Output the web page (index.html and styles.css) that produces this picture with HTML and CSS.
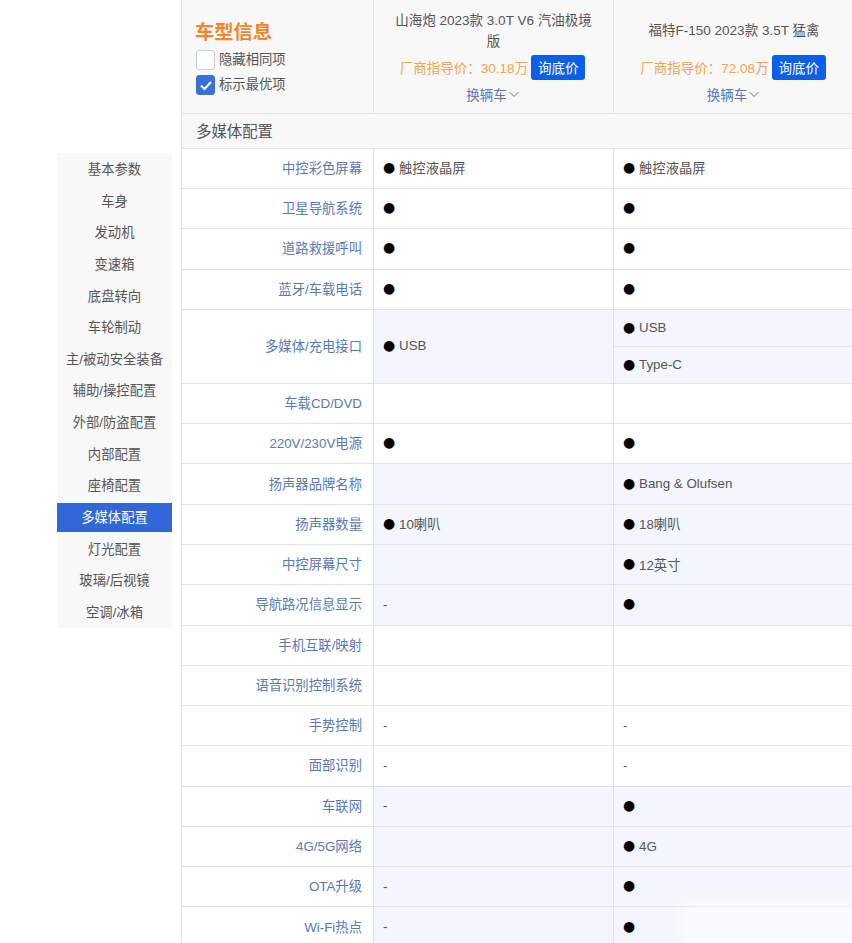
FILE: index.html
```html
<!DOCTYPE html>
<html lang="zh-CN">
  <head>
    <meta charset="UTF-8" />
    <meta name="viewport" content="width=device-width, initial-scale=1.0" />
    <title>车型信息 - 多媒体配置</title>
    <link rel="stylesheet" href="styles.css">
  </head>
  <body>
    <div class="page">
      <ul class="side-nav">
        <li>基本参数</li>
        <li>车身</li>
        <li>发动机</li>
        <li>变速箱</li>
        <li>底盘转向</li>
        <li>车轮制动</li>
        <li>主/被动安全装备</li>
        <li>辅助/操控配置</li>
        <li>外部/防盗配置</li>
        <li>内部配置</li>
        <li>座椅配置</li>
        <li class="active">多媒体配置</li>
        <li>灯光配置</li>
        <li>玻璃/后视镜</li>
        <li>空调/冰箱</li>
      </ul>

      <div class="compare">
        <div class="head-row">
          <div class="head-info">
            <h1 class="head-title">车型信息</h1>
            <label class="check-row"><span class="check-box"></span>隐藏相同项</label>
            <label class="check-row"><span class="check-box checked">
              <svg viewBox="0 0 20 20" width="20" height="20"><path d="M5 10.5l3.5 3.5L15 7" fill="none" stroke="#fff" stroke-width="2"/></svg>
            </span>标示最优项</label>
          </div>
          <div class="head-car">
            <p class="car-name">山海炮 2023款 3.0T V6 汽油极境版</p>
            <p class="car-price">厂商指导价：30.18万<button class="price-button">询底价</button></p>
            <a class="car-change">换辆车<svg viewBox="0 0 12 12" width="12" height="12"><path d="M1.5 4l4.5 4.5L10.5 4" fill="none" stroke="#5a78b4" stroke-width="1"/></svg></a>
          </div>
          <div class="head-car">
            <p class="car-name">福特F-150 2023款 3.5T 猛禽</p>
            <p class="car-price">厂商指导价：72.08万<button class="price-button">询底价</button></p>
            <a class="car-change">换辆车<svg viewBox="0 0 12 12" width="12" height="12"><path d="M1.5 4l4.5 4.5L10.5 4" fill="none" stroke="#5a78b4" stroke-width="1"/></svg></a>
          </div>
        </div>

        <div class="section-title">多媒体配置</div>

        <div class="row"><div class="label">中控彩色屏幕</div><div class="cell"><i class="dot">●</i>触控液晶屏</div><div class="cell"><i class="dot">●</i>触控液晶屏</div></div>
        <div class="row"><div class="label">卫星导航系统</div><div class="cell"><i class="dot">●</i></div><div class="cell"><i class="dot">●</i></div></div>
        <div class="row"><div class="label">道路救援呼叫</div><div class="cell"><i class="dot">●</i></div><div class="cell"><i class="dot">●</i></div></div>
        <div class="row"><div class="label">蓝牙/车载电话</div><div class="cell"><i class="dot">●</i></div><div class="cell"><i class="dot">●</i></div></div>
        <div class="row row-tall diff">
          <div class="label">多媒体/充电接口</div>
          <div class="cell"><i class="dot">●</i>USB</div>
          <div class="cell cell-split"><div class="sub"><i class="dot">●</i>USB</div><div class="sub"><i class="dot">●</i>Type-C</div></div>
        </div>
        <div class="row"><div class="label">车载CD/DVD</div><div class="cell"></div><div class="cell"></div></div>
        <div class="row"><div class="label">220V/230V电源</div><div class="cell"><i class="dot">●</i></div><div class="cell"><i class="dot">●</i></div></div>
        <div class="row diff"><div class="label">扬声器品牌名称</div><div class="cell"></div><div class="cell"><i class="dot">●</i>Bang &amp; Olufsen</div></div>
        <div class="row diff"><div class="label">扬声器数量</div><div class="cell"><i class="dot">●</i>10喇叭</div><div class="cell"><i class="dot">●</i>18喇叭</div></div>
        <div class="row diff"><div class="label">中控屏幕尺寸</div><div class="cell"></div><div class="cell"><i class="dot">●</i>12英寸</div></div>
        <div class="row diff"><div class="label">导航路况信息显示</div><div class="cell">-</div><div class="cell"><i class="dot">●</i></div></div>
        <div class="row"><div class="label">手机互联/映射</div><div class="cell"></div><div class="cell"></div></div>
        <div class="row"><div class="label">语音识别控制系统</div><div class="cell"></div><div class="cell"></div></div>
        <div class="row"><div class="label">手势控制</div><div class="cell">-</div><div class="cell">-</div></div>
        <div class="row"><div class="label">面部识别</div><div class="cell">-</div><div class="cell">-</div></div>
        <div class="row diff"><div class="label">车联网</div><div class="cell">-</div><div class="cell"><i class="dot">●</i></div></div>
        <div class="row diff"><div class="label">4G/5G网络</div><div class="cell"></div><div class="cell"><i class="dot">●</i>4G</div></div>
        <div class="row diff"><div class="label">OTA升级</div><div class="cell">-</div><div class="cell"><i class="dot">●</i></div></div>
        <div class="row diff"><div class="label">Wi-Fi热点</div><div class="cell">-</div><div class="cell"><i class="dot">●</i></div></div>
      </div>
    </div>
    <div class="smudge"></div>
  </body>
</html>
```

FILE: styles.css
```css
* {
  box-sizing: border-box;
  margin: 0;
  padding: 0;
}
html,
body {
  height: 943px;
  overflow: hidden;
  background-color: white;
}
body {
  position: relative;
  color: #555;
  font-family: "Liberation Sans", "Noto Sans CJK SC", sans-serif;
  font-size: 13.33px;
}
.page {
  display: flex;
  align-items: flex-start;
  padding-left: 57px;
}
.side-nav {
  flex: none;
  width: 115px;
  margin-top: 153px;
  margin-right: 9px;
  background-color: #f8f8f8;
  list-style: none;
}
.side-nav li {
  height: 31.65px;
  line-height: 34px;
  text-align: center;
}
.side-nav .active {
  padding: 2px 0 1px;
  line-height: 30px;
  background-color: #3366d6;
  background-clip: content-box;
  color: white;
}
.compare {
  flex: none;
  width: 672px;
  border-left: 1px solid #e2e2e2;
}
.head-row {
  display: grid;
  grid-template-columns: 191px 240px 241px;
  height: 114px;
  background-color: #f8f8f8;
  border-bottom: 1px solid #e2e2e2;
}
.head-info {
  padding: 20px 0 0 13px;
}
.head-title {
  color: #f5842a;
  font-size: 19.3px;
  line-height: 24px;
  margin-bottom: 6px;
  padding-top: 1px;
  height: 24px;
}
.check-row {
  display: flex;
  align-items: center;
  gap: 4px;
  height: 20px;
  margin-bottom: 5px;
  margin-left: 1px;
  line-height: 20px;
}
.check-box {
  flex: none;
  width: 19px;
  height: 20px;
  background-color: white;
  border: 1px solid #c4d0e4;
  border-radius: 3px;
}
.check-box svg {
  display: block;
  margin: -1px;
}
.check-box.checked {
  background-color: #3a6fd8;
  border-color: #3a6fd8;
}
.head-car {
  display: flex;
  flex-direction: column;
  align-items: center;
  padding: 8px 8px 0;
  border-left: 1px solid #e2e2e2;
  font-size: 13.5px;
  text-align: center;
}
.car-name {
  display: flex;
  align-items: center;
  height: 45px;
  line-height: 21px;
  padding: 0 12px;
}
.car-price {
  display: flex;
  align-items: center;
  color: #f0a551;
  height: 26px;
  margin-top: 1px;
  margin-left: -2px;
}
.price-button {
  width: 54px;
  height: 25px;
  margin-left: 3px;
  background-color: #0b5fe8;
  border: none;
  border-radius: 3px;
  color: white;
  font-family: inherit;
  font-size: 13.5px;
}
.car-change {
  display: flex;
  align-items: center;
  gap: 1px;
  height: 24px;
  margin-top: 2px;
  margin-left: -1px;
  color: #5a78b4;
}
.section-title {
  height: 34.7px;
  line-height: 35px;
  padding-left: 14px;
  background-color: #f8f8f8;
  border-bottom: 1px solid #e2e2e2;
  font-size: 15.4px;
}
.row {
  display: grid;
  grid-template-columns: 191px 240px 241px;
  height: 40.29px;
  border-bottom: 1px solid #e2e2e2;
}
.row-tall {
  height: 74px;
}
.label {
  display: flex;
  align-items: center;
  justify-content: flex-end;
  padding-right: 11px;
  padding-bottom: 2px;
  color: #5a78b4;
}
.cell {
  display: flex;
  align-items: center;
  padding-left: 9px;
  padding-bottom: 1px;
  border-left: 1px solid #e2e2e2;
}
.dot {
  flex: none;
  width: 16px;
  margin-bottom: 2px;
  color: black;
  font-family: "DejaVu Sans", sans-serif;
  font-size: 14px;
  font-style: normal;
}
.diff .cell {
  background-color: #f3f6fc;
}
.cell-split {
  display: block;
  padding-left: 0;
  padding-bottom: 0;
}
.sub {
  display: flex;
  align-items: center;
  height: 36px;
  padding-left: 9px;
}
.sub + .sub {
  height: 37px;
  border-top: 1px solid #e2e2e2;
}
.smudge {
  position: absolute;
  left: 680px;
  top: 900px;
  width: 190px;
  height: 50px;
  background-color: rgba(255, 255, 255, 0.55);
  filter: blur(8px);
}
```
